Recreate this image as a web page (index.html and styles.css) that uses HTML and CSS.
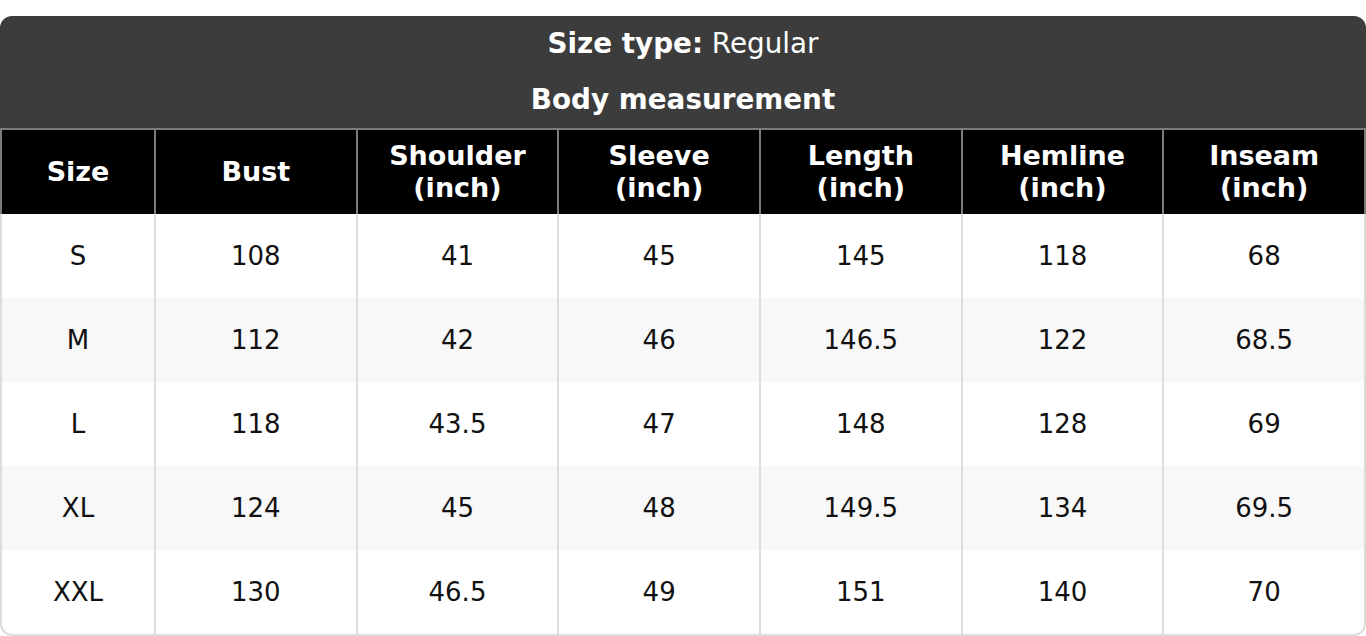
FILE: index.html
```html
<!DOCTYPE html>
<html lang="en">
<head>
<meta charset="utf-8">
<title>Size chart</title>
<link rel="stylesheet" href="styles.css">
</head>
<body>
<div class="card">
  <div class="title">
    <div class="title-line"><strong>Size type:</strong> Regular</div>
    <div class="title-line"><strong>Body measurement</strong></div>
  </div>
  <table class="chart">
    <colgroup>
      <col class="col-size">
      <col><col><col><col><col><col>
    </colgroup>
    <thead>
      <tr>
        <th>Size</th>
        <th>Bust</th>
        <th>Shoulder<br>(inch)</th>
        <th>Sleeve<br>(inch)</th>
        <th>Length<br>(inch)</th>
        <th>Hemline<br>(inch)</th>
        <th>Inseam<br>(inch)</th>
      </tr>
    </thead>
    <tbody>
      <tr><td>S</td><td>108</td><td>41</td><td>45</td><td>145</td><td>118</td><td>68</td></tr>
      <tr><td>M</td><td>112</td><td>42</td><td>46</td><td>146.5</td><td>122</td><td>68.5</td></tr>
      <tr><td>L</td><td>118</td><td>43.5</td><td>47</td><td>148</td><td>128</td><td>69</td></tr>
      <tr><td>XL</td><td>124</td><td>45</td><td>48</td><td>149.5</td><td>134</td><td>69.5</td></tr>
      <tr><td>XXL</td><td>130</td><td>46.5</td><td>49</td><td>151</td><td>140</td><td>70</td></tr>
    </tbody>
  </table>
</div>
</body>
</html>
```

FILE: styles.css
```css
html, body {
  margin: 0;
  padding: 0;
  background: #ffffff;
}

body {
  padding-top: 16px;
  font-family: "DejaVu Sans", "Liberation Sans", sans-serif;
  color: #111111;
}

.card {
  width: 1366px;
}

.title {
  background: #3c3c3c;
  color: #ffffff;
  border-radius: 12px 12px 0 0;
  padding: 8px 0 8px;
  display: flex;
  flex-direction: column;
  gap: 16px;
  text-align: center;
  font-size: 27.8px;
}

.title-line {
  line-height: 40px;
}

.chart {
  width: 100%;
  border-collapse: separate;
  border-spacing: 0;
  table-layout: fixed;
}

.col-size {
  width: 156px;
}

.chart th {
  background: #000000;
  color: #ffffff;
  font-size: 27px;
  font-weight: bold;
  line-height: 32px;
  height: 84px;
  padding: 0;
  border-top: 2px solid #7a7a7a;
  border-right: 2px solid #7a7a7a;
  vertical-align: middle;
  text-align: center;
}

.chart th:first-child {
  border-left: 2px solid #7a7a7a;
}

.chart td {
  font-size: 26px;
  height: 84px;
  padding: 0;
  border-right: 2px solid #dddddd;
  text-align: center;
  vertical-align: middle;
  background: #ffffff;
}

.chart td:first-child {
  border-left: 2px solid #dddddd;
}

.chart tbody tr:nth-child(even) td {
  background: #f8f8f8;
}

.chart tbody tr:last-child td {
  border-bottom: 2px solid #dddddd;
}

.chart tbody tr:last-child td:first-child {
  border-bottom-left-radius: 12px;
}

.chart tbody tr:last-child td:last-child {
  border-bottom-right-radius: 12px;
}
```
